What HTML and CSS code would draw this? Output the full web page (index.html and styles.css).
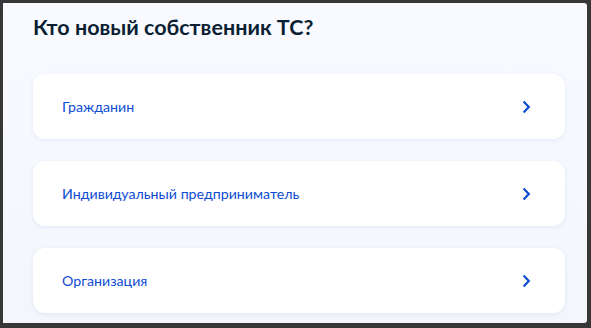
FILE: index.html
```html
<!DOCTYPE html>
<html lang="ru">
<head>
    <meta charset="UTF-8">
    <meta name="viewport" content="width=device-width, initial-scale=1.0">
    <title>Новый собственник</title>
    <link rel="stylesheet" href="styles.css">
</head>
<body>
    <div class="window">
        <h1>Кто новый собственник ТС?</h1>

        <!-- Варианты выбора -->
        <div class="options">
            <a class="option" href="#">
                <span>Гражданин</span>
                <svg class="chevron" width="9" height="14" viewBox="0 0 9 14"><path d="M1.6 1.6 L6.8 7 L1.6 12.4"/></svg>
            </a>
            <a class="option" href="#">
                <span>Индивидуальный предприниматель</span>
                <svg class="chevron" width="9" height="14" viewBox="0 0 9 14"><path d="M1.6 1.6 L6.8 7 L1.6 12.4"/></svg>
            </a>
            <a class="option" href="#">
                <span>Организация</span>
                <svg class="chevron" width="9" height="14" viewBox="0 0 9 14"><path d="M1.6 1.6 L6.8 7 L1.6 12.4"/></svg>
            </a>
        </div>
    </div>
</body>
</html>
```

FILE: styles.css
```css
body {
    margin: 0;
    padding: 3px 4px 5px 3px;
    background-color: #373737;
    font-family: Lato, "Liberation Sans", sans-serif;
    height: 328px;
    box-sizing: border-box;
    overflow: hidden;
}

.window {
    height: 320px;
    box-sizing: border-box;
    background: linear-gradient(180deg, #f8faff 0%, #f3f6fb 100%);
    border-radius: 0 3px 3px 0;
    padding: 12px 22px 0 30px;
}

h1 {
    margin: 0;
    font-size: 21.5px;
    line-height: 25px;
    font-weight: 700;
    color: #0b1f33;
}

.options {
    display: flex;
    flex-direction: column;
    gap: 22px;
    margin-top: 34px;
}

.option {
    display: flex;
    justify-content: space-between;
    align-items: center;
    height: 65px;
    padding: 0 34px 0 29px;
    background-color: #fff;
    border-radius: 12px;
    box-shadow: 0 1px 4px rgba(102, 127, 196, 0.12);
    text-decoration: none;
    color: #0d4cd3;
    font-size: 14.2px;
}

.chevron path {
    fill: none;
    stroke: #0d4cd3;
    stroke-width: 2.2;
}
```
